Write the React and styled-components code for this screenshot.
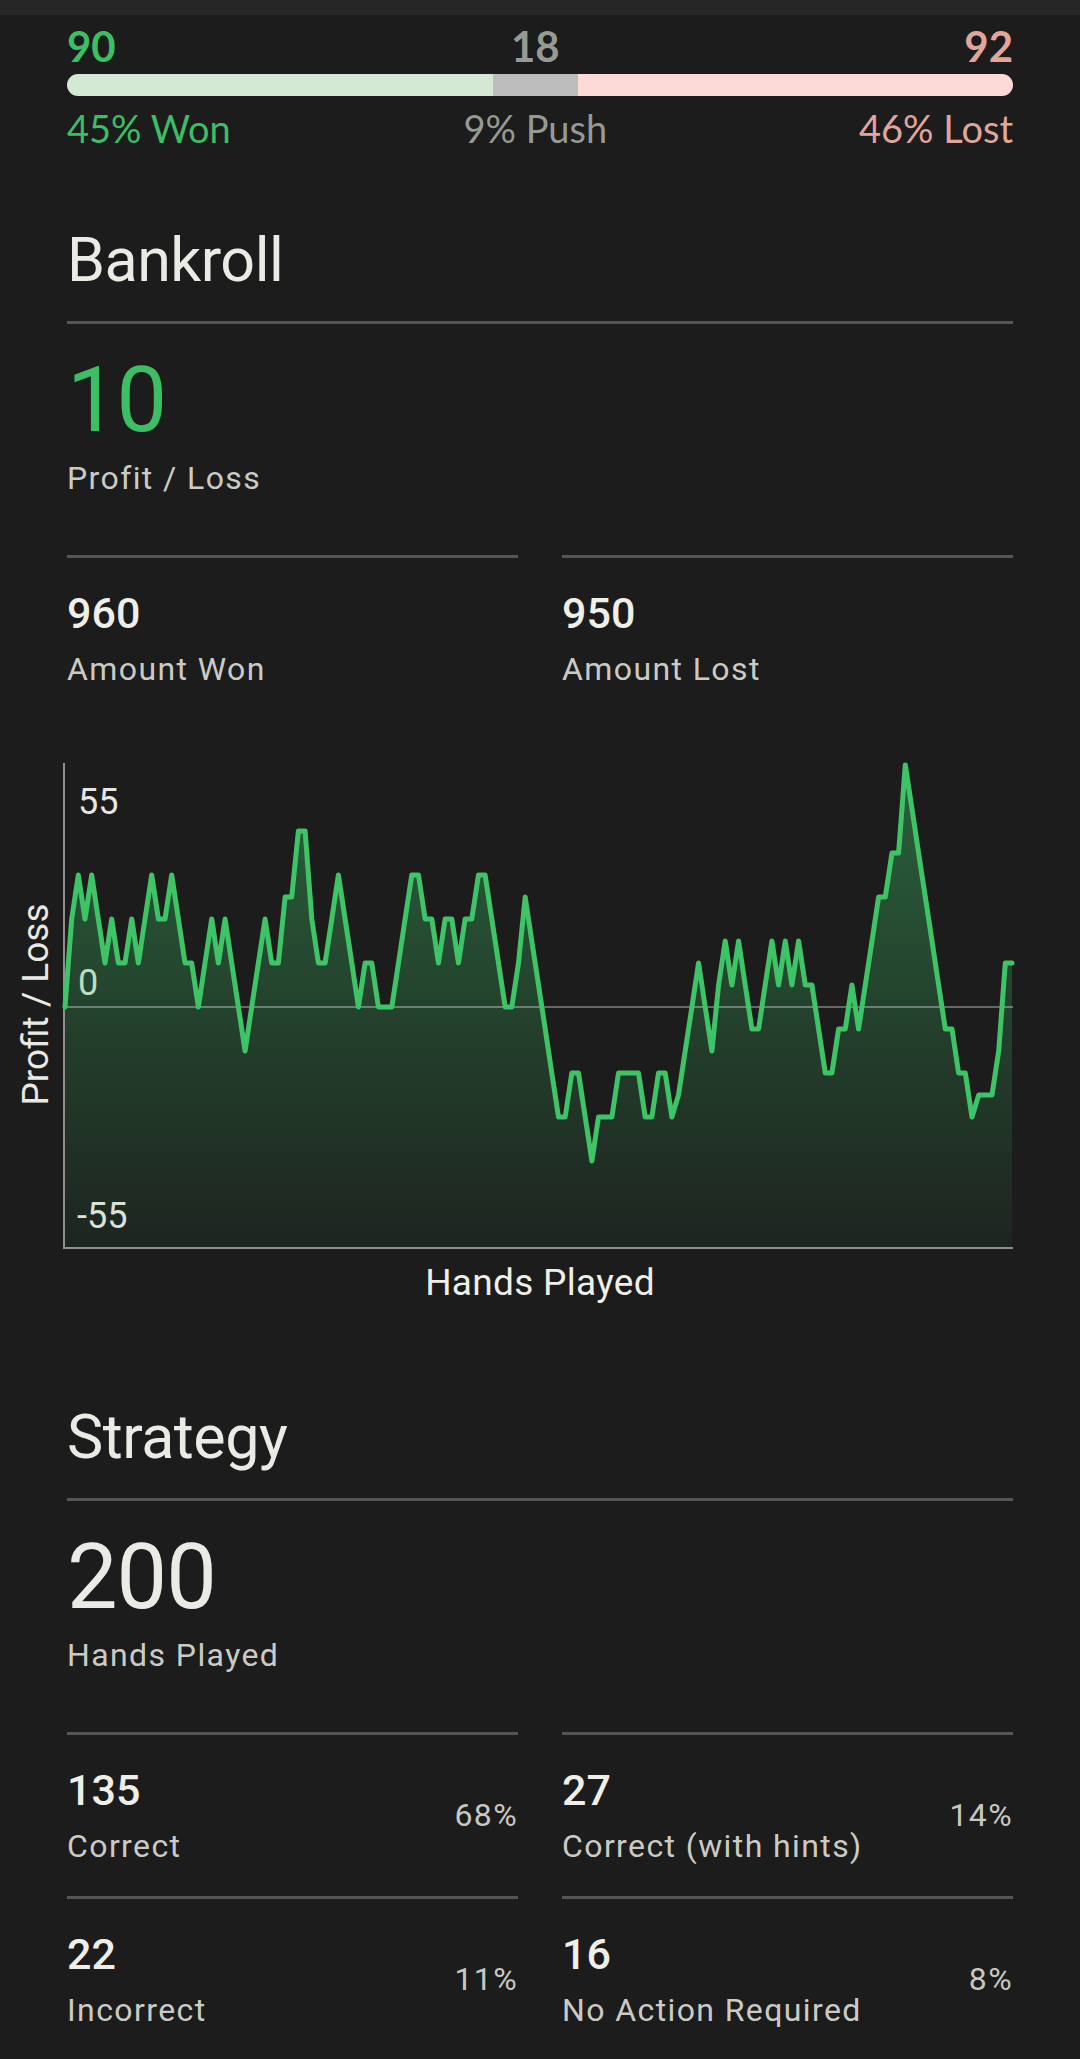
import React from "react";
import styled, { createGlobalStyle } from "styled-components";

const GlobalStyle = createGlobalStyle`
  html, body {
    margin: 0;
    padding: 0;
    background: #1c1c1c;
  }
  body {
    font-family: Roboto, "Noto Sans", sans-serif;
    color: #ebebe5;
  }
`;

const GREEN = "#3dbd64";
const GRAY = "#959a92";
const PINK = "#e2a59c";

const outcomes = [
  { key: "won", count: 90, label: "Won", tone: GREEN, bar: "#d4e9d4", align: "flex-start" },
  { key: "push", count: 18, label: "Push", tone: GRAY, bar: "#bdbdbd", align: "center" },
  { key: "lost", count: 92, label: "Lost", tone: PINK, bar: "#fedad7", align: "flex-end" },
];

// bankroll after each hand, in steps of 5
const levels = [
  0, 4, 6, 4, 6, 4, 2, 4, 2, 2, 4, 2, 4, 6, 4, 4, 6, 4, 2, 2, 0, 2, 4, 2, 4, 2, 0, -2, 0, 2, 4, 2, 2, 5, 5, 8, 8,
  4, 2, 2, 4, 6, 4, 2, 0, 2, 2, 0, 0, 0, 2, 4, 6, 6, 4, 4, 2, 4, 4, 2, 4, 4, 6, 6, 4, 2, 0, 0, 2, 5, 3, 1, -1,
  -3, -5, -5, -3, -3, -5, -7, -5, -5, -5, -3, -3, -3, -3, -5, -5, -3, -3, -5, -4, -2, 0, 2, 0, -2, 1, 3, 1, 3, 1,
  -1, -1, 1, 3, 1, 3, 1, 3, 1, 1, -1, -3, -3, -1, -1, 1, -1, 1, 3, 5, 5, 7, 7, 11, 9, 7, 5, 3, 1, -1, -1, -3, -3,
  -5, -4, -4, -4, -2, 2, 2,
];
const profit = levels.map((l) => l * 5);

const strategy = [
  { value: 135, label: "Correct", pct: "68%" },
  { value: 27, label: "Correct (with hints)", pct: "14%" },
  { value: 22, label: "Incorrect", pct: "11%" },
  { value: 16, label: "No Action Required", pct: "8%" },
];

const TopStrip = styled.div`
  height: 15px;
  background: #262626;
`;

const Page = styled.main`
  padding: 0 67px;
`;

const Summary = styled.section`
  padding-top: 6px;
  font-family: Lato, "Noto Sans", sans-serif;
`;

const SplitRow = styled.div`
  display: grid;
  grid-template-columns: ${(p) => p.$cols};
  margin-top: ${(p) => p.$top || 0}px;
`;

const Count = styled.div`
  display: flex;
  justify-content: ${(p) => p.$align};
  min-width: 0;
  white-space: nowrap;
  color: ${(p) => p.$tone};
  font-size: 42px;
  font-weight: 700;
  line-height: 50px;
`;

const ShareLabel = styled(Count)`
  font-size: 38px;
  font-weight: 400;
  line-height: 46px;
`;

const ShareBar = styled.div`
  display: flex;
  height: 22px;
  margin-top: 3px;
  border-radius: 11px;
  overflow: hidden;
`;

const ShareSegment = styled.div`
  flex: ${(p) => p.$share} 1 0;
  background: ${(p) => p.$color};
`;

const Section = styled.section`
  margin-top: ${(p) => p.$top}px;
`;

const SectionTitle = styled.h2`
  margin: 0;
  font-size: 61px;
  font-weight: 400;
  line-height: 72px;
  letter-spacing: -0.5px;
  color: #ebebe5;
`;

const Rule = styled.div`
  height: 3px;
  margin-top: 25px;
  background: #545452;
`;

const HeroValue = styled.div`
  margin-top: 24px;
  font-size: 90px;
  line-height: 106px;
  letter-spacing: -1px;
  color: ${(p) => p.$tone || "#ebebe6"};
`;

const HeroLabel = styled.div`
  margin-top: 5px;
  font-size: 32px;
  line-height: 38px;
  letter-spacing: 1.4px;
  color: #cbcbc6;
`;

const StatGrid = styled.div`
  display: grid;
  grid-template-columns: 1fr 1fr;
  column-gap: 44px;
  margin-top: 58px;
`;

const StatCell = styled.div`
  display: flex;
  align-items: center;
  justify-content: space-between;
  border-top: 3px solid #545452;
  padding: 30px 0 31px;
`;

const StatText = styled.div`
  display: flex;
  flex-direction: column;
`;

const StatValue = styled.div`
  font-size: 43px;
  font-weight: 500;
  line-height: 50px;
  color: #efefea;
`;

const StatLabel = styled.div`
  margin-top: 12px;
  font-size: 32px;
  line-height: 38px;
  letter-spacing: 1.4px;
  color: #cbcbc6;
  white-space: nowrap;
`;

const StatPercent = styled.div`
  font-size: 32px;
  line-height: 38px;
  letter-spacing: 1.4px;
  color: #c8c8c3;
`;

const ChartSvg = styled.svg`
  display: block;
  width: 1080px;
  height: 500px;
  margin: 36px -67px 0;
  font-family: Roboto, "Noto Sans", sans-serif;
`;

const AxisCaption = styled.div`
  margin-top: 6px;
  text-align: center;
  font-size: 37px;
  line-height: 43px;
  letter-spacing: 0.3px;
  color: #efefea;
`;

const X0 = 65;
const X1 = 1012;
const ZERO = 252;
const TOP = 10;
const BOTTOM = 494;

const ProfitChart = ({ data }) => {
  const max = Math.max(...data.map((v) => Math.abs(v)));
  const unit = (ZERO - TOP) / max;
  const step = (X1 - X0) / (data.length - 1);
  const pts = data.map((v, i) => [X0 + i * step, ZERO - v * unit]);
  const line = pts.map(([x, y], i) => `${i ? "L" : "M"}${x.toFixed(1)},${y.toFixed(1)}`).join(" ");
  const area = `${line} L${X1},${BOTTOM} L${X0},${BOTTOM} Z`;

  return (
    <ChartSvg viewBox="0 0 1080 500">
      <defs>
        <linearGradient id="plFill" x1="0" y1={TOP} x2="0" y2={BOTTOM} gradientUnits="userSpaceOnUse">
          <stop offset="0" stopColor="#3dc266" stopOpacity="0.42" />
          <stop offset="0.5" stopColor="#3dc266" stopOpacity="0.23" />
          <stop offset="1" stopColor="#3dc266" stopOpacity="0.05" />
        </linearGradient>
      </defs>
      <text x="48" y="249.5" transform="rotate(-90 48 249.5)" textAnchor="middle" fontSize="37" fill="#e8e8e4">
        Profit / Loss
      </text>
      <g fontSize="36" fill="#e6e6e2">
        <text x="78" y="59">{max}</text>
        <text x="78" y="239.5">0</text>
        <text x="77" y="473">-{max}</text>
      </g>
      <path d={area} fill="url(#plFill)" />
      <line x1="64" y1={ZERO} x2="1013" y2={ZERO} stroke="rgba(255,255,255,0.33)" strokeWidth="2" />
      <line x1="64" y1={TOP - 2} x2="64" y2={BOTTOM} stroke="#8e8e8e" strokeWidth="2" />
      <line x1="63" y1={BOTTOM - 1} x2="1013" y2={BOTTOM - 1} stroke="#8e8e8e" strokeWidth="2" />
      <path d={line} fill="none" stroke="#3ec466" strokeWidth="5" strokeLinejoin="round" strokeLinecap="round" />
    </ChartSvg>
  );
};

const App = () => {
  const total = outcomes.reduce((s, o) => s + o.count, 0);
  const cols = outcomes.map((o) => `minmax(0, ${o.count}fr)`).join(" ");

  return (
    <>
      <GlobalStyle />
      <TopStrip />
      <Page>
        <Summary>
          <SplitRow $cols={cols}>
            {outcomes.map((o) => (
              <Count key={o.key} $tone={o.tone} $align={o.align}>
                {o.count}
              </Count>
            ))}
          </SplitRow>
          <ShareBar>
            {outcomes.map((o) => (
              <ShareSegment key={o.key} $share={o.count} $color={o.bar} />
            ))}
          </ShareBar>
          <SplitRow $cols={cols} $top={9}>
            {outcomes.map((o) => (
              <ShareLabel key={o.key} $tone={o.tone} $align={o.align}>
                {Math.round((o.count / total) * 100)}% {o.label}
              </ShareLabel>
            ))}
          </SplitRow>
        </Summary>

        <Section $top={73}>
          <SectionTitle>Bankroll</SectionTitle>
          <Rule />
          <HeroValue $tone={GREEN}>10</HeroValue>
          <HeroLabel>Profit / Loss</HeroLabel>
          <StatGrid>
            <StatCell>
              <StatText>
                <StatValue>960</StatValue>
                <StatLabel>Amount Won</StatLabel>
              </StatText>
            </StatCell>
            <StatCell>
              <StatText>
                <StatValue>950</StatValue>
                <StatLabel>Amount Lost</StatLabel>
              </StatText>
            </StatCell>
          </StatGrid>
          <ProfitChart data={profit} />
          <AxisCaption>Hands Played</AxisCaption>
        </Section>

        <Section $top={97}>
          <SectionTitle>Strategy</SectionTitle>
          <Rule />
          <HeroValue>200</HeroValue>
          <HeroLabel>Hands Played</HeroLabel>
          <StatGrid>
            {strategy.map((s) => (
              <StatCell key={s.label}>
                <StatText>
                  <StatValue>{s.value}</StatValue>
                  <StatLabel>{s.label}</StatLabel>
                </StatText>
                <StatPercent>{s.pct}</StatPercent>
              </StatCell>
            ))}
          </StatGrid>
        </Section>
      </Page>
    </>
  );
};

export default App;
